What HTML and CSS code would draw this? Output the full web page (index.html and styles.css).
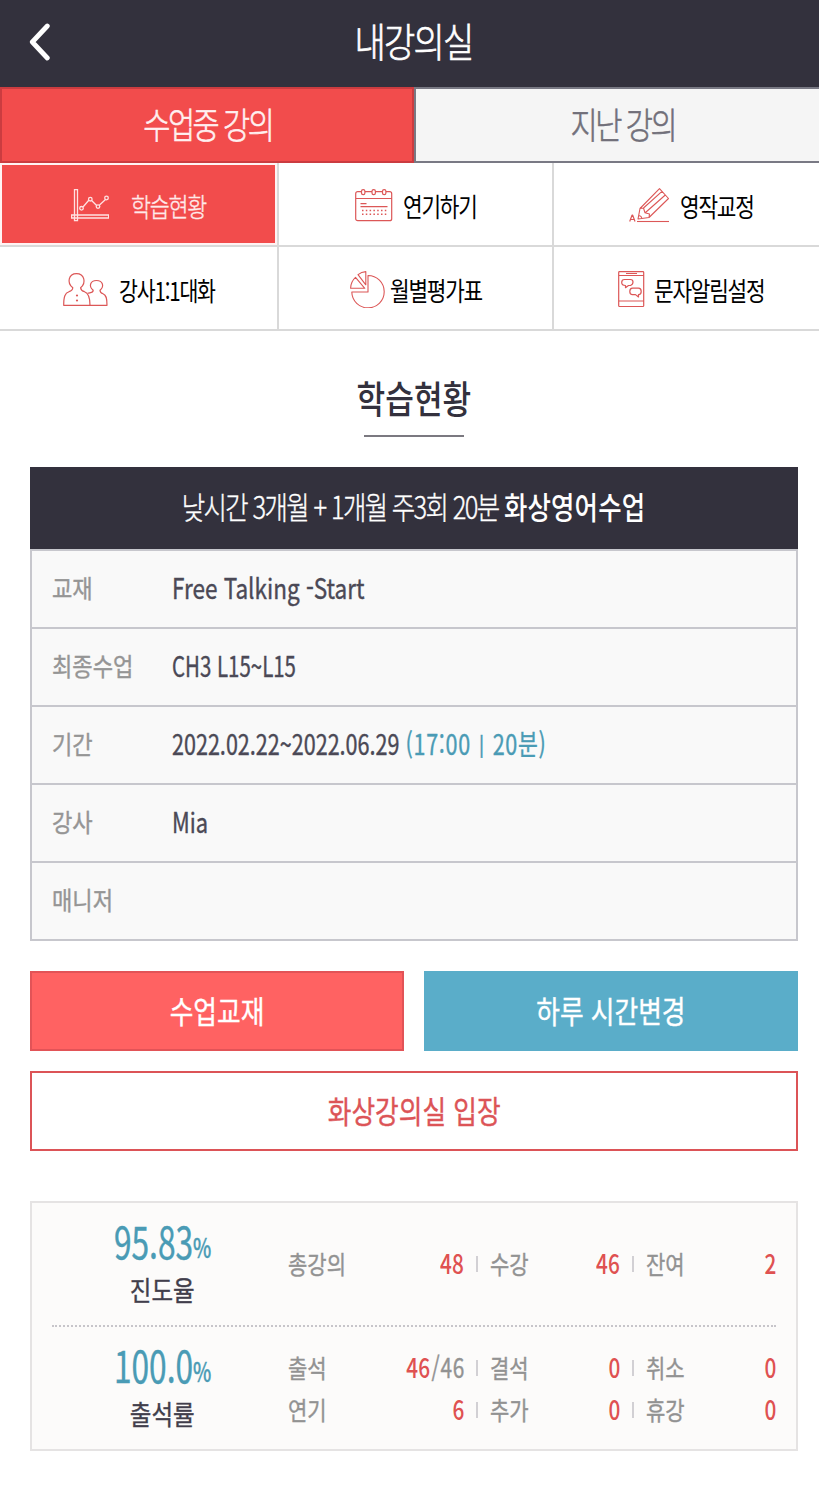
FILE: index.html
```html
<!DOCTYPE html>
<html lang="ko">
<head>
<meta charset="utf-8">
<title>내강의실</title>
<link rel="stylesheet" href="styles.css">
</head>
<body>
<header class="topbar">
  <svg class="back" width="22" height="38" viewBox="0 0 22 38"><path d="M18.300 3L3.300 19L18.300 35" fill="none" stroke="#fff" stroke-width="4.800" stroke-linecap="round" stroke-linejoin="round"/></svg>
  <h1 class="topbar-title"><span class="t">내강의실</span></h1>
</header>

<nav class="tabs">
  <a class="tab tab-on"><span class="t">수업중 강의</span></a>
  <a class="tab tab-off"><span class="t">지난 강의</span></a>
</nav>

<nav class="menu">
  <a class="item item-chart active">
    <svg width="38" height="33" viewBox="0 0 38 33" fill="none" stroke="#ffe1e1" stroke-width="1.300"><path d="M3.500.6h3v31h-3zM.6 26h37v3H.6z"/><path d="M12 18l6-7M20.600 11.500l5 5M28.500 16l6-5.500"/><circle cx="10.500" cy="19.300" r="1.800"/><circle cx="19.300" cy="10.200" r="1.800"/><circle cx="27" cy="17.600" r="1.800"/><circle cx="35.500" cy="9" r="1.800"/></svg>
    <span class="t">학습현황</span>
  </a>
  <a class="item item-cal">
    <svg width="38" height="33" viewBox="0 0 38 33" fill="none" stroke="#dc5757" stroke-width="1.200"><rect x=".7" y="2.700" width="36" height="29" rx="2"/><path d="M1 9.500h36M5.500 14.700h6M5.500 17.700h27"/><path d="M7 21.500h25M7 25.200h25" stroke-width="1.500" stroke-dasharray="1.500 2.300"/><g fill="#fff"><rect x="6.500" y=".6" width="3.400" height="5" rx="1.600"/><rect x="17" y=".6" width="3.400" height="5" rx="1.600"/><rect x="27.500" y=".6" width="3.400" height="5" rx="1.600"/></g></svg>
    <span class="t">연기하기</span>
  </a>
  <a class="item item-pen">
    <svg width="40" height="35" viewBox="0 0 40 35" fill="none" stroke="#dc5757" stroke-width="1.100" stroke-linejoin="round"><path d="M9 31L11 20.500L30.500.7L39.500 10.500L20 29.500ZM11 20.500l3.500-.5 1.500 4.800 4.500 1.200-.5 3.500M14.500 20L33 3.400M16.500 24.500L36.300 7M10 27.500q2.500.5 2.800 2.800"/><path d="M8 33.500h32"/><path d="M.7 33.500L3 27.200h.7L6 33.500M1.500 31.500h3.700" stroke-width="1.200"/></svg>
    <span class="t">영작교정</span>
  </a>
  <a class="item item-talk">
    <svg width="45" height="34" viewBox="0 0 45 34" fill="none" stroke="#dc5757" stroke-width="1.200" stroke-linejoin="round"><path d="M9.800 14.800C3.500 10 5.500.7 13.500.7S23.500 10 17.600 14.800C18 17.500 19 18 21.500 18.700C25.500 20 27 23.500 27 32.300H.7C.7 23.500 2 20 6 18.700C8.500 18 9.600 17.500 9.800 14.800Z"/><path d="M24.800 20.200C28 19.500 30.200 20 30.200 17.200C25.500 13.500 27 7.500 33.500 7.500S41.500 13.500 37 17.200C37 19.500 38 20 40 20.800C43.200 22 44 25 44 32.300H27"/><g fill="#dc5757" stroke="none"><circle cx="14" cy="22.500" r="1.100"/><circle cx="14" cy="27.500" r="1.100"/></g></svg>
    <span class="t">강사1:1대화</span>
  </a>
  <a class="item item-pie">
    <svg width="35" height="37" viewBox="0 0 35 37" fill="none" stroke="#dc5757" stroke-width="1.100" stroke-linejoin="round"><path d="M18 4.500V21H1.800A16.200 16.200 0 1 0 18 4.500Z"/><path d="M14.800 17.300H.6Q.8 10.500 5.500 6.300Z"/><path d="M15.800 13.800L8 3.700Q11.500.8 15.800.6Z"/></svg>
    <span class="t">월별평가표</span>
  </a>
  <a class="item item-sms">
    <svg width="27" height="37" viewBox="0 0 27 37" fill="none" stroke="#dc5757" stroke-width="1.200" stroke-linejoin="round"><rect x=".7" y=".7" width="25" height="34.800" rx=".8"/><path d="M1 4.500h25M1 30h25M8 2.500h11"/><path d="M6.500 8.500h6Q15 8.500 15 11t-2.500 3.500h-2L7.500 16.700V14.500Q3.700 14.500 3.700 11.500T6.500 8.500Z"/><path d="M14.500 17.200h6q2.700 0 2.700 3.200t-2.700 3.200V26l-3-2.400h-3q-2.700 0-2.700-3.200t2.700-3.200Z"/></svg>
    <span class="t">문자알림설정</span>
  </a>
</nav>

<main class="content">
  <h2 class="heading"><span class="t">학습현황</span></h2>

  <section class="course">
    <h3 class="course-title"><span class="t">낮시간 3개월 + 1개월 주3회 20분 <b>화상영어수업</b></span></h3>
    <dl class="rows">
      <div class="row"><dt><span class="t">교재</span></dt><dd><span class="t v-book">Free Talking -Start</span></dd></div>
      <div class="row"><dt><span class="t">최종수업</span></dt><dd><span class="t v-last">CH3 L15~L15</span></dd></div>
      <div class="row"><dt><span class="t">기간</span></dt><dd><span class="t v-term">2022.02.22~2022.06.29 <em>(17:00 <small>|</small> 20분)</em></span></dd></div>
      <div class="row"><dt><span class="t">강사</span></dt><dd><span class="t v-name">Mia</span></dd></div>
      <div class="row"><dt><span class="t">매니저</span></dt><dd></dd></div>
    </dl>
  </section>

  <div class="buttons">
    <a class="btn btn-red"><span class="t">수업교재</span></a>
    <a class="btn btn-blue"><span class="t">하루 시간변경</span></a>
    <a class="btn btn-line"><span class="t">화상강의실 입장</span></a>
  </div>

  <section class="stats">
    <div class="stat">
      <div class="rate"><div class="num"><span class="t">95.83<small>%</small></span></div><div class="name"><span class="t">진도율</span></div></div>
      <div class="cells">
        <div class="cell"><span class="t k">총강의</span><span class="t n">48</span></div>
        <div class="cell"><span class="t k">수강</span><span class="t n">46</span></div>
        <div class="cell"><span class="t k">잔여</span><span class="t n">2</span></div>
      </div>
    </div>
    <div class="stat">
      <div class="rate"><div class="num"><span class="t">100.0<small>%</small></span></div><div class="name"><span class="t">출석률</span></div></div>
      <div class="cells">
        <div class="cell"><span class="t k">출석</span><span class="t n">46<i>/46</i></span></div>
        <div class="cell"><span class="t k">결석</span><span class="t n">0</span></div>
        <div class="cell"><span class="t k">취소</span><span class="t n">0</span></div>
        <div class="cell"><span class="t k">연기</span><span class="t n">6</span></div>
        <div class="cell"><span class="t k">추가</span><span class="t n">0</span></div>
        <div class="cell"><span class="t k">휴강</span><span class="t n">0</span></div>
      </div>
    </div>
  </section>
</main>
</body>
</html>
```
FILE: styles.css
```css
* { box-sizing: border-box; }
body {
  margin: 0;
  background: #fff;
  color: #33313d;
  font-family: "Noto Sans CJK KR", sans-serif;
  width: 819px;
  min-height: 1486px;
  overflow-x: hidden;
}
h1, h2, h3, dl, dd { margin: 0; font-weight: 400; }

/* condensed lettering */
.t { display: inline-block; white-space: nowrap; transform: scaleX(.85); -webkit-text-stroke: .4px; }

.topbar {
  display: grid;
  grid-template-columns: 29px 22px 1fr 41px;
  align-items: center;
  height: 87px;
  background: #33313d;
  color: #fff;
}
.back { grid-column: 2; margin-bottom: 3px; }
.topbar-title { grid-column: 3; text-align: center; font-size: 40px; line-height: 80px; font-weight: 300; letter-spacing: -2.100px; margin: -8px 0 0 -2px; }
.topbar-title .t { -webkit-text-stroke: .7px; }

.tabs { display: flex; width: 828px; height: 76px; }
.tab { display: flex; align-items: center; justify-content: center; width: 414px; padding-bottom: 4px; font-size: 36px; line-height: 70px; font-weight: 300; letter-spacing: -3px; }
.tab .t { transform: scaleX(.82); -webkit-text-stroke: .6px; }
.tab-on { background: #f24c4c; border: 2px solid #cb3c40; color: #fff0f0; padding-left: 2px; }
.tab-off { background: #f5f5f5; border: 2px solid #797984; color: #716f79; padding-left: 3px; }

.menu { display: grid; grid-template-columns: 279px 275px 265px; grid-auto-rows: 84px; }
.item { display: flex; align-items: center; border-right: 2px solid #d9d9d9; border-bottom: 2px solid #d9d9d9; color: #000; font-size: 26px; line-height: 40px; letter-spacing: -1.500px; }
.item:nth-child(3n) { border-right: 0; }
.item svg { flex: none; margin-top: 3px; }
.item .t { transform: scaleX(.82); transform-origin: left; margin-top: 3px; -webkit-text-stroke: 0; }
.item.active .t { transform: scaleX(.835); -webkit-text-stroke: .4px; }
.item.item-talk .t { transform: scaleX(.79); }
.active { background: #f24c4c; color: #ffeaea; font-weight: 300; box-shadow: inset 0 0 0 2px #fff3f3; }
.item-chart { padding-left: 71px; gap: 22px; }
.item-cal { padding-left: 76px; gap: 10px; }
.item-pen { padding-left: 75px; gap: 11px; }
.item-talk { padding-left: 63px; gap: 11px; }
.item-pie { padding-left: 71px; gap: 5px; }
.item-sms { padding-left: 64px; gap: 9px; }

.content { padding: 0 21px 0 30px; }
.heading { display: flex; flex-direction: column; align-items: center; height: 136px; padding-top: 37px; font-size: 38px; line-height: 58px; font-weight: 500; }
.heading .t { transform: scaleX(.82); -webkit-text-stroke: 0; }
.heading::after { content: ""; width: 100px; height: 2px; margin-top: 9px; background: #7b7980; }

.course-title { height: 82px; background: #33313d; color: #fff; text-align: center; font-size: 31px; line-height: 78px; font-weight: 300; letter-spacing: -2px; }
.course-title .t { transform: scaleX(.82); margin: 0 -60px; -webkit-text-stroke: .4px; }
.course-title b { font-weight: 500; letter-spacing: .2px; -webkit-text-stroke: 0; }
.rows { border: 2px solid #c7c7cd; border-top: 0; background: #f9f9f9; }
.row { display: flex; height: 78px; border-top: 2px solid #c7c7cd; padding-left: 20px; line-height: 73px; }
.row dt { width: 120px; color: #959595; font-size: 25px; }
.row dd { font-size: 28px; color: #4b4956; }
.row .t { transform: scaleX(.885); transform-origin: left; }
.row .v-book { transform: scaleX(.805); }
.row .v-last { transform: scaleX(.73); }
.row .v-term { transform: scaleX(.77); }
.row .v-name { transform: scaleX(.78); }
.row em { font-style: normal; color: #4a9bb5; letter-spacing: .9px; }
.row small { font-size: 20px; font-weight: 700; vertical-align: 3px; padding: 0 2px; line-height: 1; }

.buttons { display: grid; grid-template-columns: 1fr 1fr; gap: 20px; margin-top: 30px; }
.btn { display: flex; align-items: center; justify-content: center; height: 80px; font-size: 31px; line-height: 60px; border: 2px solid; padding-bottom: 3px; }
.btn .t { transform: scaleX(.83); }
.btn-red { background: #ff6262; border-color: #e25357; color: #fff; }
.btn-blue { background: #5aadc9; border-color: #5aadc9; color: #fff; }
.btn-line { grid-column: 1 / 3; border-color: #dc5457; color: #dc5457; }

.stats { height: 250px; margin-top: 50px; padding: 0 20px; border: 2px solid #e5e3e3; background: #fcfbfa; }
.stat { display: grid; grid-template-columns: 236px 488px; height: 124px; }
.stat:first-child { border-bottom: 2px dotted #c7c5ca; }
.rate { display: flex; flex-direction: column; align-items: center; padding: 9px 15px 0 0; }
.num { height: 56px; font-size: 44px; line-height: 56px; color: #4a9bb5; }
.num .t { transform: scaleX(.72); margin: 0 -30px; line-height: 56px; }
.num small { font-size: 27px; font-weight: 500; vertical-align: 1px; line-height: 1; }
.name { height: 32px; margin-top: 6px; font-size: 27px; line-height: 32px; color: #413e4b; }
.name .t { transform: scaleX(.87); }
.cells { display: grid; grid-template-columns: 176px 130px 130px; column-gap: 26px; grid-auto-rows: 42px; align-content: center; }
.cell { position: relative; display: flex; justify-content: space-between; align-items: center; height: 40px; line-height: 40px; font-size: 25px; color: #929292; }
.cell:not(:nth-child(3n))::after { content: ""; position: absolute; left: calc(100% + 12px); top: 13px; width: 2px; height: 16px; background: #d2d0d4; }
.cell .k { transform: scaleX(.84); transform-origin: left; }
.cell .n { transform: scaleX(.77); transform-origin: right; font-size: 27px; color: #df5151; font-weight: 500; -webkit-text-stroke: 0; }
.cell i { font-style: normal; font-weight: 400; letter-spacing: 1px; color: #929292; margin: 0 -1px 0 2px; -webkit-text-stroke: .4px; }
```
